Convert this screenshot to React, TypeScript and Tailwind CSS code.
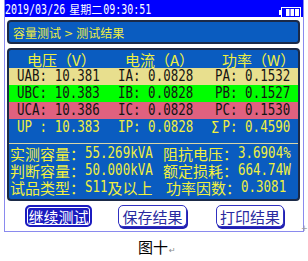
const L =
  "inline-block whitespace-pre font-['DejaVu_Sans_Mono',monospace] text-[12.5px] leading-none scale-y-[1.3]";
const T =
  "inline-block whitespace-pre font-['DejaVu_Sans_Mono',monospace] text-[10px] leading-none scale-y-[1.35]";
const C = "font-['Noto_Sans_CJK_SC',sans-serif] text-[15px] leading-none whitespace-pre";

const rows = [
  { bg: 'bg-[#e8df8e]', fg: 'text-[#141414]', cells: ['UAB: 10.381', 'IA: 0.0828', 'PA: 0.1532'] },
  { bg: 'bg-[#00ff00]', fg: 'text-[#141414]', cells: ['UBC: 10.383', 'IB: 0.0828', 'PB: 0.1527'] },
  { bg: 'bg-[#e0617f]', fg: 'text-[#141414]', cells: ['UCA: 10.386', 'IC: 0.0828', 'PC: 0.1530'] },
];

function Battery() {
  return (
    <svg width="22" height="11" viewBox="0 0 22 11" className="mt-[7px]">
      <rect x="0" y="3" width="2" height="5" fill="white" />
      <rect x="2.5" y="0.5" width="19" height="10" fill="none" stroke="white" />
      <rect x="7" y="2" width="3.5" height="7" fill="white" />
      <rect x="11.5" y="2" width="3.5" height="7" fill="white" />
      <rect x="16" y="2" width="4" height="7" fill="white" />
    </svg>
  );
}

function Info({ label, children }: { label: string; children: React.ReactNode }) {
  return (
    <span className="flex items-center">
      <span className={C}>{label}</span>
      {children}
    </span>
  );
}

export default function App() {
  return (
    <div className="relative h-[261px] w-[308px] bg-white">
      <div className="ml-1 flex h-[232px] w-[300px] flex-col border border-t-0 border-[#8a8aee] bg-white">
        {/* status bar */}
        <div className="flex h-[17px] items-center justify-between bg-[#0000ff] pr-[2px] text-white">
          <div className="flex items-center pt-[2px]">
            <span className={T}>2019/03/26</span>
            <span className="ml-[4px] font-['Noto_Sans_CJK_SC',sans-serif] text-[11px] leading-none">星期二</span>
            <span className={`${T} ml-[1px]`}>09:30:51</span>
          </div>
          <Battery />
        </div>

        {/* breadcrumb */}
        <div className="mt-[3px] ml-[2px] mr-[3px] flex h-[24px] items-center rounded-[4px] border-2 border-[#1b2a48] bg-[#0a5cc0] pl-[4px] pt-[2px] text-[#f0f040]">
          <span className="font-['Noto_Sans_CJK_SC',sans-serif] text-[12px] leading-none">容量测试</span>
          <span className="mx-[3px] font-['DejaVu_Sans',sans-serif] text-[11px] leading-none">&gt;</span>
          <span className="font-['Noto_Sans_CJK_SC',sans-serif] text-[12px] leading-none">测试结果</span>
        </div>

        {/* measurements */}
        <div className="mt-[4px] ml-[2px] mr-[3px] flex h-[153px] flex-col overflow-hidden rounded-[4px] border-2 border-[#1b2a48] bg-[#0a5cc0]">
          <div className={`grid h-[18px] grid-cols-[98px_97px_1fr] items-center pl-[18px] text-[#f0f040] ${C}`}>
            <span>电压（V）</span>
            <span>电流（A）</span>
            <span>功率（W）</span>
          </div>
          {rows.map((r) => (
            <div key={r.cells[0]} className={`grid h-[17px] grid-cols-[101px_97px_1fr] items-center pl-[8px] ${r.bg} ${r.fg}`}>
              {r.cells.map((c) => (
                <span key={c} className={L}>
                  {c}
                </span>
              ))}
            </div>
          ))}
          <div className="grid h-[17px] grid-cols-[101px_97px_1fr] items-center pl-[8px] text-[#f0f040]">
            <span className={L}>UP : 10.383</span>
            <span className={L}>IP: 0.0828</span>
            <span className="-ml-[7.5px] flex items-center">
              <span className="inline-block w-[15px] scale-y-[1.2] text-center font-['DejaVu_Sans',sans-serif] text-[13px] leading-none">Σ</span>
              <span className={L}>P: 0.4590</span>
            </span>
          </div>
          <div className="mt-[7px] h-px bg-[#d6d6a8]" />
          <div className="flex flex-col pt-[1px] text-[#f0f040]">
            <div className="grid h-[17px] grid-cols-[153px_1fr] items-center pl-[1px]">
              <Info label="实测容量：">
                <span className={L}>55.269kVA</span>
              </Info>
              <Info label="阻抗电压：">
                <span className={L}>3.6904%</span>
              </Info>
            </div>
            <div className="grid h-[17px] grid-cols-[153px_1fr] items-center pl-[1px]">
              <Info label="判断容量：">
                <span className={L}>50.000kVA</span>
              </Info>
              <Info label="额定损耗：">
                <span className={L}>664.74W</span>
              </Info>
            </div>
            <div className="grid h-[17px] grid-cols-[153px_1fr] items-center pl-[1px]">
              <Info label="试品类型：">
                <span className={L}>S11</span>
                <span className={C}>及以上</span>
              </Info>
              <span className="ml-[3px] flex items-center">
                <span className={C}>功率因数：</span>
                <span className={L}>0.3081</span>
              </span>
            </div>
          </div>
        </div>

        {/* buttons */}
        <div className="mt-[4px] flex h-[22px] items-stretch">
          <button className="ml-[20px] flex w-[67px] items-center justify-center rounded-[5px] border-2 border-[#1c1cc0] bg-[#1c1cc0] text-white shadow-[inset_0_0_0_1px_white]">
            <span className={C}>继续测试</span>
          </button>
          <button className="ml-[26px] flex w-[69px] items-center justify-center rounded-[5px] border border-[#3030c0] bg-white text-[#2a2aa0] shadow-[1px_2px_0_#2020b0]">
            <span className={C}>保存结果</span>
          </button>
          <button className="ml-[29px] flex w-[68px] items-center justify-center rounded-[5px] border border-[#3030c0] bg-white text-[#2a2aa0] shadow-[1px_2px_0_#2020b0]">
            <span className={C}>打印结果</span>
          </button>
        </div>
      </div>

      <span className="absolute left-[301px] top-[225px] font-['DejaVu_Sans',sans-serif] text-[8px] leading-none text-[#a0a0a0]">+</span>

      {/* caption */}
      <div className="mt-[7px] flex items-end pl-[138px] text-black">
        <span className="font-['Noto_Sans_CJK_SC',sans-serif] text-[15px] leading-[16px]">图十</span>
        <span className="ml-[1px] font-['DejaVu_Sans',sans-serif] text-[8px] leading-none text-[#888]">↵</span>
      </div>
    </div>
  );
}
